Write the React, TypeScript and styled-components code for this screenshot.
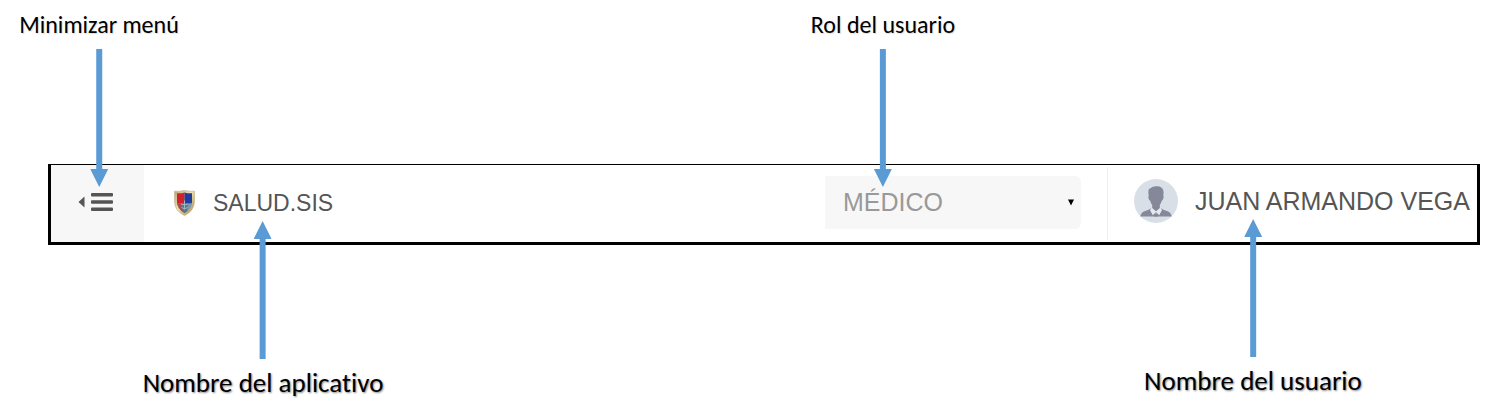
import React from "react";
import styled, { createGlobalStyle } from "styled-components";

const GlobalStyle = createGlobalStyle`
  *, *::before, *::after { box-sizing: border-box; }
  body {
    margin: 0;
    background: #fff;
    font-family: "Liberation Sans", Arial, sans-serif;
  }
`;

const Figure = styled.main`
  padding: 164px 16px 172px 48px;
`;

const Bar = styled.header`
  display: flex;
  align-items: stretch;
  min-height: 81px;
  border: 3px solid #000;
  border-top-width: 1px;
  background: #fff;
  color: #555;
`;

const MenuCell = styled.div`
  position: relative;
  display: flex;
  flex: 0 0 93px;
`;

const MenuButton = styled.button`
  display: flex;
  flex: 1;
  align-items: center;
  justify-content: center;
  padding: 0 4px 3px 0;
  border: 0;
  background: #f7f7f7;
  cursor: pointer;
`;

const Brand = styled.div`
  display: flex;
  align-items: center;
  gap: 18px;
  padding: 0 0 2px 30px;
`;

const Target = styled.span`
  position: relative;
  display: block;
  white-space: nowrap;
`;

const BrandName = styled(Target)`
  font-size: 23px;
  line-height: 28px;
`;

const UserArea = styled.div`
  display: flex;
  align-items: center;
  margin-left: auto;
`;

const RoleField = styled.div`
  position: relative;
  display: flex;
  align-items: center;
  width: 256px;
  margin: 0 26px 2px 0;
`;

const RoleSelect = styled.select`
  appearance: none;
  width: 100%;
  height: 53px;
  padding: 0 32px 2px 18px;
  border: 0;
  border-radius: 0 6px 6px 0;
  background: #f7f7f7;
  color: #999;
  font-family: inherit;
  font-size: 25px;
`;

const Caret = styled.svg`
  position: absolute;
  right: 7px;
  pointer-events: none;
`;

const Profile = styled.div`
  display: flex;
  align-items: center;
  align-self: stretch;
  gap: 17px;
  margin: 2px 0;
  padding: 0 7px 5px 26px;
  border-left: 1px solid #eee;
`;

const UserName = styled(Target)`
  font-size: 25px;
  line-height: 28px;
`;

type Side = "above" | "below";

const CalloutBox = styled.span<{ $side: Side; $anchor: string; $reach: string }>`
  position: absolute;
  left: ${(p) => p.$anchor};
  ${(p) => (p.$side === "above" ? "bottom" : "top")}: ${(p) => p.$reach};
  z-index: 1;
  display: flex;
  flex-direction: ${(p) => (p.$side === "above" ? "column" : "column-reverse")};
  align-items: center;
  gap: 10px;
  transform: translateX(-50%);
  pointer-events: none;
`;

const CalloutText = styled.span<{ $side: Side }>`
  color: #000;
  font-family: Calibri, Carlito, Lato, sans-serif;
  font-size: ${(p) => (p.$side === "above" ? "24px" : "27px")};
  font-variant-ligatures: none;
  line-height: 28px;
  white-space: nowrap;
  text-shadow: ${(p) =>
    p.$side === "above" ? "1px 1px 1px #ddd" : "1px 1px 2px #888"};
`;

function Callout(props: { side: Side; anchor: string; reach: string; text: string }) {
  const { side, anchor, reach, text } = props;
  return (
    <CalloutBox $side={side} $anchor={anchor} $reach={reach}>
      <CalloutText $side={side}>{text}</CalloutText>
      <svg width="18" height="138" viewBox="0 0 18 138" aria-hidden="true">
        <path
          fill="#5b9bd5"
          d={
            side === "above"
              ? "M6 0h6v120h6l-9 18l-9-18h6z"
              : "M9 0l9 18h-6v120h-6v-120h-6z"
          }
        />
      </svg>
    </CalloutBox>
  );
}

function MenuIcon() {
  return (
    <svg width="35" height="20" viewBox="0 0 35 20" fill="#555" aria-hidden="true">
      <path d="M6.5 4.5v11L.5 10z" />
      <rect x="13" y="1" width="22" height="3.6" rx="1" />
      <rect x="13" y="8.2" width="22" height="3.6" rx="1" />
      <rect x="13" y="15.4" width="22" height="3.6" rx="1" />
    </svg>
  );
}

function Shield() {
  return (
    <svg width="21" height="26" viewBox="0 0 21 26" aria-hidden="true">
      <defs>
        <linearGradient id="gold" x1="0" y1="0" x2="1" y2="1">
          <stop offset="0" stopColor="#b9a67c" />
          <stop offset=".45" stopColor="#efe0ae" />
          <stop offset="1" stopColor="#a8874c" />
        </linearGradient>
        <clipPath id="field">
          <path d="M3 3.2Q7 3.6 10.5 2.4Q14 3.6 18 3.2V12Q17.6 19 10.5 23.2Q3.4 19 3 12z" />
        </clipPath>
      </defs>
      <path
        d="M.6 1.2Q6 1.8 10.5.4Q15 1.8 20.4 1.2V12Q20 21 10.5 25.6Q1 21 .6 12z"
        fill="url(#gold)"
        stroke="#b7a47a"
        strokeWidth=".6"
      />
      <g clipPath="url(#field)">
        <path d="M3 2h7.5v11.5H3z" fill="#d3212c" />
        <path d="M10.5 2H18v11.5h-7.5z" fill="#203c9c" />
        <path d="M3 13h15v11H3z" fill="#58758e" />
        <path d="M3 13l4 1 2 8-6-4z" fill="#a94a4a" />
        <path d="M18 13l-4 1-1 7 5-3z" fill="#7c9aae" />
      </g>
      <path
        d="M10.5 10.5v9M7 14l3.5 1 3.5-1M7.5 17.5q3 2.6 6 0"
        fill="none"
        stroke="#a9bcc8"
        strokeWidth=".9"
      />
    </svg>
  );
}

function Avatar() {
  return (
    <svg width="44" height="44" viewBox="0 0 44 44" role="img" aria-label="Foto del usuario">
      <circle cx="22" cy="22" r="22" fill="#d8dfe6" />
      <g fill="#848899">
        <path d="M14.4 13.5Q14 9.8 16.4 9.2Q19 6.8 23 7.2Q28.4 7.4 29.3 11.5Q30 14 29.2 16.6Q30.2 17 29.3 19.5Q28.8 21.6 27.8 21.8Q27 24.6 25.8 26V29L22 32.5L18.2 29V26Q16.8 24.6 16.2 21.8Q15.1 21.6 14.6 19.5Q13.9 17 14.9 16.6Q14.1 15 14.4 13.5z" />
        <path d="M6.3 37.5Q7 33.4 10.5 32.2Q15.2 30.9 17.2 29.2L22 36.5L26.8 29.2Q28.8 30.9 33.5 32.2Q37 33.4 37.7 37.5z" />
      </g>
      <path
        d="M17.6 29L22 32.5L26.4 29L28 31L25.2 36.2L22 32.8L18.8 36.2L16 31z"
        fill="#e4e9ef"
      />
      <path d="M22 32.8L24 37.5H20z" fill="#848899" />
    </svg>
  );
}

export default function App() {
  return (
    <>
      <GlobalStyle />
      <Figure>
        <Bar>
          <MenuCell>
            <MenuButton type="button" aria-label="Minimizar menú">
              <MenuIcon />
            </MenuButton>
            <Callout side="above" anchor="48px" reach="55px" text="Minimizar menú" />
          </MenuCell>
          <Brand>
            <Shield />
            <BrandName>
              SALUD.SIS
              <Callout side="below" anchor="50px" reach="32px" text="Nombre del aplicativo" />
            </BrandName>
          </Brand>
          <UserArea>
            <RoleField>
              <RoleSelect aria-label="Rol del usuario" defaultValue="medico">
                <option value="medico">MÉDICO</option>
              </RoleSelect>
              <Caret width="6" height="7" viewBox="0 0 6 7" aria-hidden="true">
                <path d="M0 .5h6L3 6.5z" fill="#000" />
              </Caret>
              <Callout side="above" anchor="58px" reach="42px" text="Rol del usuario" />
            </RoleField>
            <Profile>
              <Avatar />
              <UserName>
                JUAN ARMANDO VEGA
                <Callout side="below" anchor="58px" reach="32px" text="Nombre del usuario" />
              </UserName>
            </Profile>
          </UserArea>
        </Bar>
      </Figure>
    </>
  );
}
